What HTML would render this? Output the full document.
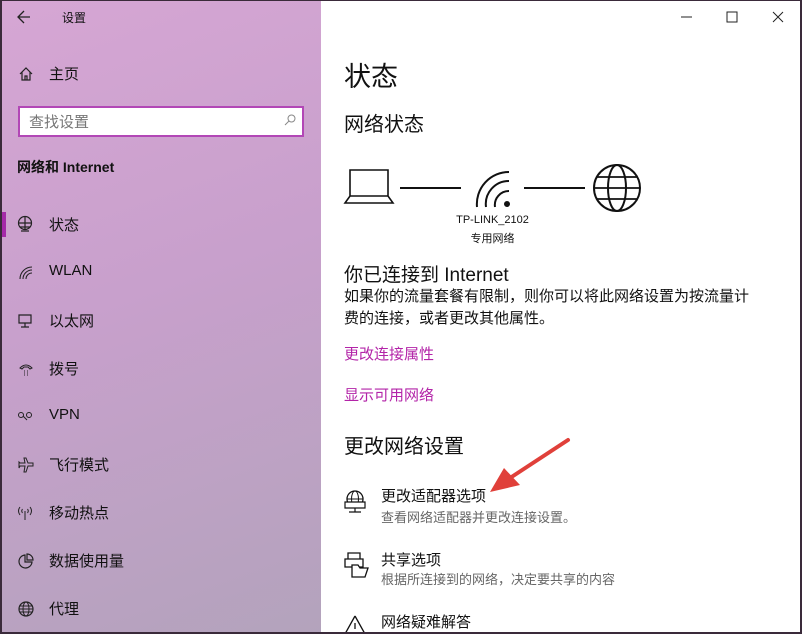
<!DOCTYPE html><html><head><meta charset="utf-8"><style>
*{margin:0;padding:0;box-sizing:border-box}
body{width:802px;height:634px;overflow:hidden;font-family:"Liberation Sans","Noto Sans CJK SC",sans-serif;color:#111;position:relative;background:#fff}
.side{position:absolute;left:0;top:0;width:321px;height:634px;background:linear-gradient(160deg,#d6a6d4 0%,#c8a0cc 45%,#b3a3bc 100%)}
.a{position:absolute;white-space:nowrap}
.nav{font-size:15px}
svg{position:absolute;overflow:visible}
</style></head><body>
<div class="side"></div>
<div style="position:absolute;left:0;top:0;width:802px;height:634px;border:2px solid #3a2a3a;border-top-width:1px;border-bottom-width:2px;pointer-events:none;z-index:5"></div>
<svg style="left:17px;top:10px" width="14" height="14"><path d="M1 7H13M7 1L1 7L7 13" fill="none" stroke="#222" stroke-width="1.3"/></svg>
<div class="a" style="left:62px;top:9px;font-size:12px">设置</div>
<svg style="left:18px;top:66px" width="16" height="16"><path d="M2 8L8 2L14 8M4 6V14H12V6M7 14V10H9V14" fill="none" stroke="#222" stroke-width="1.2"/></svg>
<div class="a nav" style="left:49px;top:63px">主页</div>
<div class="a" style="left:18px;top:106px;width:286px;height:31px;background:#fff;border:2px solid #b247b6"></div>
<div class="a" style="left:29px;top:111px;font-size:15px;color:#777">查找设置</div>
<svg style="left:284px;top:114px" width="12" height="12"><circle cx="7.5" cy="4.5" r="3.5" fill="none" stroke="#888"/><path d="M5 7L1 11" stroke="#888"/></svg>
<div class="a" style="left:17px;top:157px;font-size:14px;font-weight:bold">网络和 Internet</div>
<div class="a" style="left:2px;top:212px;width:4px;height:25px;background:#a42aa8"></div>
<svg style="left:17px;top:216px" width="17" height="17"><circle cx="8" cy="7" r="6.5" fill="none" stroke="#222" stroke-width="1.2"/><path d="M2 7H14M8 1V13M4 15H12M3 11H13" fill="none" stroke="#222" stroke-width="1.2"/></svg>
<div class="a nav" style="left:49px;top:214px">状态</div>
<svg style="left:18px;top:265px" width="16" height="16"><path d="M2 14A12 12 0 0 1 14 2M5 14A9 9 0 0 1 14 5M8 14A6 6 0 0 1 14 8" fill="none" stroke="#222" stroke-width="1.1"/></svg>
<div class="a nav" style="left:49px;top:262px">WLAN</div>
<svg style="left:18px;top:313px" width="16" height="16"><path d="M1 2H13V10H1ZM7 10V14M3 14H11" fill="none" stroke="#222" stroke-width="1.2"/></svg>
<div class="a nav" style="left:49px;top:310px">以太网</div>
<svg style="left:18px;top:362px" width="16" height="16"><path d="M2 6Q8 0 14 6L12 7L10 5H6L4 7Z" fill="none" stroke="#222"/><path d="M6 9h1M9 9h1M6 11h1M9 11h1M6 13h1M9 13h1" stroke="#222"/></svg>
<div class="a nav" style="left:49px;top:358px">拨号</div>
<svg style="left:17px;top:410px" width="16" height="14"><circle cx="4" cy="5" r="2.5" fill="none" stroke="#222"/><circle cx="12" cy="5" r="2.5" fill="none" stroke="#222"/><path d="M6 6L10 10" stroke="#222"/></svg>
<div class="a nav" style="left:49px;top:406px">VPN</div>
<svg style="left:18px;top:457px" width="16" height="16"><path d="M8 1L10 6H15V9H10L8 15H6L7 9H2L1 11V5L2 6H7L6 1Z" fill="none" stroke="#222"/></svg>
<div class="a nav" style="left:49px;top:454px">飞行模式</div>
<svg style="left:17px;top:505px" width="16" height="16"><path d="M8 6V15M3 2Q0 6 3 10M13 2Q16 6 13 10M5.5 4Q4 6 5.5 8M10.5 4Q12 6 10.5 8" fill="none" stroke="#222"/></svg>
<div class="a nav" style="left:49px;top:502px">移动热点</div>
<svg style="left:18px;top:553px" width="16" height="16"><path d="M7 2A6.5 6.5 0 1 0 14 9H7Z" fill="none" stroke="#222" stroke-width="1.2"/><path d="M9 1A6 6 0 0 1 15 7H9Z" fill="none" stroke="#222" stroke-width="1.2"/></svg>
<div class="a nav" style="left:49px;top:550px">数据使用量</div>
<svg style="left:18px;top:601px" width="16" height="16"><circle cx="8" cy="8" r="7" fill="none" stroke="#222" stroke-width="1.2"/><ellipse cx="8" cy="8" rx="3" ry="7" fill="none" stroke="#222"/><path d="M1 8H15M2 5H14M2 11H14" stroke="#222"/></svg>
<div class="a nav" style="left:49px;top:598px">代理</div>

<svg style="left:681px;top:11px" width="110" height="14"><path d="M0 6H11" stroke="#222"/><rect x="46" y="1" width="10" height="10" fill="none" stroke="#222"/><path d="M92 1L102 11M102 1L92 11" stroke="#222"/></svg>
<div class="a" style="left:344px;top:55px;font-size:27px">状态</div>
<div class="a" style="left:344px;top:108px;font-size:20px">网络状态</div>
<svg style="left:344px;top:164px" width="300" height="50"><path d="M6 6H44V32H6ZM1 39L6 32H44L49 39Z" fill="none" stroke="#111" stroke-width="1.6"/><path d="M56 24H117M180 24H241" stroke="#111" stroke-width="2"/><path d="M133 43A32 32 0 0 1 165 8M142 43A23 23 0 0 1 165 17M151 43A14 14 0 0 1 165 27" fill="none" stroke="#111" stroke-width="2"/><circle cx="163" cy="40" r="3" fill="#111"/><circle cx="273" cy="24" r="23" fill="none" stroke="#111" stroke-width="2"/><ellipse cx="273" cy="24" rx="9" ry="23" fill="none" stroke="#111" stroke-width="2"/><path d="M250 24H296M253 13H293M253 35H293" stroke="#111" stroke-width="1.8"/></svg>
<div class="a" style="left:455px;top:214px;font-size:11px;width:75px;text-align:center">TP-LINK_2102</div>
<div class="a" style="left:455px;top:230px;font-size:11px;width:75px;text-align:center">专用网络</div>
<div class="a" style="left:344px;top:260px;font-size:19px">你已连接到 Internet</div>
<div class="a" style="left:344px;top:286px;font-size:15px;line-height:22px">如果你的流量套餐有限制，则你可以将此网络设置为按流量计<br>费的连接，或者更改其他属性。</div>
<div class="a" style="left:344px;top:343px;font-size:15px;color:#b324a8">更改连接属性</div>
<div class="a" style="left:344px;top:384px;font-size:15px;color:#b324a8">显示可用网络</div>
<div class="a" style="left:344px;top:430px;font-size:20px">更改网络设置</div>
<svg style="left:344px;top:490px" width="24" height="24"><circle cx="11" cy="9" r="8" fill="none" stroke="#111" stroke-width="1.3"/><ellipse cx="11" cy="9" rx="3.5" ry="8" fill="none" stroke="#111"/><path d="M3 9H19" stroke="#111"/><path d="M1 12H21V18H1ZM11 18V22M5 22H17" fill="#fff" stroke="#111" stroke-width="1.2"/></svg>
<div class="a" style="left:381px;top:485px;font-size:15px">更改适配器选项</div>
<div class="a" style="left:381px;top:507px;font-size:13px;color:#666">查看网络适配器并更改连接设置。</div>
<svg style="left:344px;top:552px" width="26" height="26"><path d="M4 1H16V7H4ZM1 7H19V15H1ZM4 15H10" fill="none" stroke="#111" stroke-width="1.3"/><path d="M8 13H14L16 16H24L21 25H8Z" fill="#fff" stroke="#111" stroke-width="1.3"/></svg>
<div class="a" style="left:381px;top:549px;font-size:15px">共享选项</div>
<div class="a" style="left:381px;top:569px;font-size:13px;color:#666">根据所连接到的网络，决定要共享的内容</div>
<svg style="left:344px;top:614px" width="24" height="20"><path d="M11 2L1 20M11 2L21 20M11 9V15" fill="none" stroke="#111" stroke-width="1.3"/></svg>
<div class="a" style="left:381px;top:611px;font-size:15px">网络疑难解答</div>
<svg style="left:480px;top:435px" width="100" height="65"><path d="M88 5L30 43" stroke="#e0403a" stroke-width="4" stroke-linecap="round"/><path d="M10 57L24 33L40 50Z" fill="#e0403a"/></svg>
</body></html>
